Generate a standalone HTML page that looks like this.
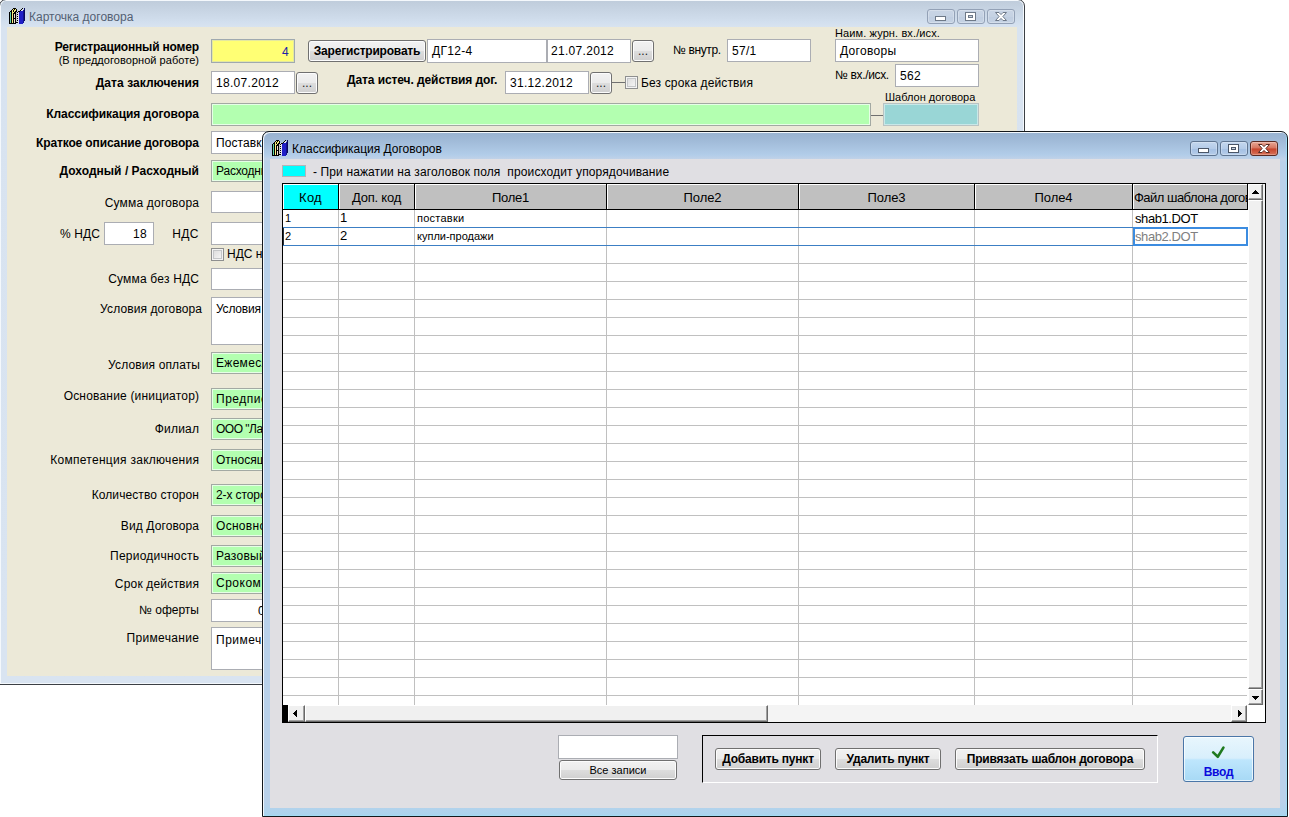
<!DOCTYPE html>
<html lang="ru">
<head>
<meta charset="utf-8">
<title>Карточка договора</title>
<style>
*{box-sizing:border-box;margin:0;padding:0}
html,body{width:1289px;height:817px;overflow:hidden;background:#fff}
body{position:relative;font-family:"Liberation Sans",sans-serif;font-size:12px;color:#000}
.abs,.win,.cl,.lb,.in,.btn,.cap,.cb,.ln,.ttl,.hd,.ct,.sb,.ok{position:absolute}
.win{width:1026px;height:686px;border-radius:7px 7px 0 0;overflow:hidden}
.cl{left:7px;top:27px;width:1010px;height:649px}
#w1{left:-1px;top:-1px;border:1px solid #3c4045;box-shadow:inset 0 0 0 1px #f4f8fc;background:linear-gradient(#bfccdb 0,#c1cedd 3px,#c9d6e5 12px,#d2dfee 22px,#d8e3f0 27px,#d9e4f1 100%)}
#w1 .cl{background:#ece9d8}
#w2{left:262px;top:131px;border:1px solid #14181c;box-shadow:inset 1px 1px 0 #f2f7fc,inset -1px -1px 0 #a2dcf4;background:linear-gradient(#99b3d1 0,#9db7d5 6px,#b2cde9 23px,#c0d2e8 27px,#b9d1ea 30px,#b9d1ea 670px,#aad4ee 684px)}
#w2 .cl{background:#e0dfe3}
.ttl{font-size:12px;white-space:nowrap;line-height:16px}
.lb{white-space:nowrap;line-height:14px;text-align:right}
.b{font-weight:bold}
.in{background:#fff;border:1px solid #abadb3;white-space:nowrap;overflow:hidden;line-height:14px;padding:3px 0 0 4px;letter-spacing:0.3px}
.in.g{background:#b3ffb0;border-color:#a3a9a3;box-shadow:inset 0 0 0 1px #e6ffe6}
.in.y{background:#ffff74;border-color:#9fa9b0;box-shadow:inset 0 0 0 1px #e4e8a0}
.btn{border:1px solid #707070;border-radius:3px;background:linear-gradient(#f2f2f2 0,#ebebeb 48%,#dddddd 52%,#cfcfcf 100%);box-shadow:inset 0 0 0 1px #fcfcfc;text-align:center;white-space:nowrap;line-height:14px}
.cb{width:13px;height:13px;border:1px solid #8e8f8f;background:linear-gradient(135deg,#d8d8d8,#fafafa);box-shadow:inset 0 0 0 1px #f4f4f4, inset 0 0 0 2px #c4c6c8}
.ln{height:1px;background:#707070}
.cap{top:9px;height:15px;width:28px;border:1px solid #93a1b6;border-radius:3px;background:linear-gradient(#c9d5e5,#c5d2e3 50%,#bfcde0 51%,#c6d3e4);box-shadow:inset 0 0 0 1px rgba(255,255,255,.25)}
.cap svg{position:absolute;left:-1px;top:-1px}
.hd{background:#c0c0c0;border-right:1px solid #000;border-bottom:1px solid #000;box-shadow:inset 1px 1px 0 #fff;text-align:center;font-size:13px;line-height:15px;padding-top:6px;white-space:nowrap;overflow:hidden}
.ct{white-space:nowrap;line-height:16px}
.sb{background:#f0f0f0;border:1px solid;border-color:#fff #696969 #696969 #fff;box-shadow:inset -1px -1px 0 #a0a0a0}
.sb svg{position:absolute;left:-1px;top:-1px}
.ok{border:1px solid #4a76a8;border-radius:3px;background:linear-gradient(#e8f6fd 0,#d8effc 48%,#bee6fd 52%,#a7d9f5 100%);box-shadow:inset 0 0 0 1px rgba(255,255,255,.7)}
</style>
</head>
<body>
<div class="win" id="w1">
<svg class="abs" style="left:9px;top:8px" width="16" height="16" viewBox="0 0 16 16" shape-rendering="crispEdges"><rect x="4" y="0" width="3" height="1" fill="#000"/><rect x="13" y="0" width="1" height="1" fill="#000"/><rect x="15" y="0" width="1" height="1" fill="#07075f"/><rect x="3" y="1" width="1" height="1" fill="#000"/><rect x="4" y="1" width="1" height="1" fill="#f7ef7f"/><rect x="5" y="1" width="1" height="1" fill="#000"/><rect x="6" y="1" width="1" height="1" fill="#f7ef7f"/><rect x="7" y="1" width="1" height="1" fill="#000"/><rect x="12" y="1" width="1" height="1" fill="#000"/><rect x="13" y="1" width="1" height="1" fill="#e3e3ef"/><rect x="15" y="1" width="1" height="1" fill="#07075f"/><rect x="2" y="2" width="1" height="1" fill="#000"/><rect x="3" y="2" width="1" height="1" fill="#f7ef7f"/><rect x="4" y="2" width="1" height="1" fill="#000"/><rect x="5" y="2" width="2" height="1" fill="#f7ef7f"/><rect x="7" y="2" width="1" height="1" fill="#000"/><rect x="11" y="2" width="1" height="1" fill="#000"/><rect x="12" y="2" width="2" height="1" fill="#e3e3ef"/><rect x="14" y="2" width="1" height="1" fill="#11118f"/><rect x="15" y="2" width="1" height="1" fill="#07075f"/><rect x="1" y="3" width="2" height="1" fill="#000"/><rect x="3" y="3" width="1" height="1" fill="#f7ef7f"/><rect x="4" y="3" width="1" height="1" fill="#000"/><rect x="5" y="3" width="1" height="1" fill="#f7ef7f"/><rect x="6" y="3" width="2" height="1" fill="#000"/><rect x="8" y="3" width="1" height="1" fill="#e3e3ef"/><rect x="9" y="3" width="2" height="1" fill="#000"/><rect x="11" y="3" width="3" height="1" fill="#1f1fc7"/><rect x="14" y="3" width="1" height="1" fill="#11118f"/><rect x="15" y="3" width="1" height="1" fill="#07075f"/><rect x="0" y="4" width="1" height="1" fill="#000"/><rect x="1" y="4" width="1" height="1" fill="#5fd7a7"/><rect x="2" y="4" width="1" height="1" fill="#000"/><rect x="3" y="4" width="2" height="1" fill="#f7ef7f"/><rect x="5" y="4" width="2" height="1" fill="#000"/><rect x="7" y="4" width="1" height="1" fill="#c3c7bf"/><rect x="8" y="4" width="1" height="1" fill="#000"/><rect x="9" y="4" width="1" height="1" fill="#e3e3ef"/><rect x="10" y="4" width="4" height="1" fill="#1f1fc7"/><rect x="14" y="4" width="1" height="1" fill="#11118f"/><rect x="15" y="4" width="1" height="1" fill="#07075f"/><rect x="0" y="5" width="1" height="1" fill="#000"/><rect x="1" y="5" width="1" height="1" fill="#5fd7a7"/><rect x="2" y="5" width="1" height="1" fill="#000"/><rect x="3" y="5" width="1" height="1" fill="#f7ef7f"/><rect x="4" y="5" width="3" height="1" fill="#000"/><rect x="7" y="5" width="1" height="1" fill="#c3c7bf"/><rect x="8" y="5" width="2" height="1" fill="#e3e3ef"/><rect x="10" y="5" width="4" height="1" fill="#1f1fc7"/><rect x="14" y="5" width="1" height="1" fill="#11118f"/><rect x="15" y="5" width="1" height="1" fill="#07075f"/><rect x="0" y="6" width="1" height="1" fill="#000"/><rect x="1" y="6" width="1" height="1" fill="#5fd7a7"/><rect x="2" y="6" width="1" height="1" fill="#000"/><rect x="3" y="6" width="1" height="1" fill="#f7ef7f"/><rect x="4" y="6" width="1" height="1" fill="#000"/><rect x="5" y="6" width="1" height="1" fill="#f3ddd0"/><rect x="6" y="6" width="1" height="1" fill="#000"/><rect x="7" y="6" width="1" height="1" fill="#c3c7bf"/><rect x="8" y="6" width="1" height="1" fill="#000"/><rect x="9" y="6" width="1" height="1" fill="#e3e3ef"/><rect x="10" y="6" width="4" height="1" fill="#1f1fc7"/><rect x="14" y="6" width="1" height="1" fill="#11118f"/><rect x="15" y="6" width="1" height="1" fill="#07075f"/><rect x="0" y="7" width="1" height="1" fill="#000"/><rect x="1" y="7" width="1" height="1" fill="#5fd7a7"/><rect x="2" y="7" width="1" height="1" fill="#000"/><rect x="3" y="7" width="1" height="1" fill="#f7ef7f"/><rect x="4" y="7" width="1" height="1" fill="#000"/><rect x="5" y="7" width="1" height="1" fill="#f3ddd0"/><rect x="6" y="7" width="1" height="1" fill="#000"/><rect x="7" y="7" width="1" height="1" fill="#c3c7bf"/><rect x="8" y="7" width="2" height="1" fill="#e3e3ef"/><rect x="10" y="7" width="4" height="1" fill="#1f1fc7"/><rect x="14" y="7" width="1" height="1" fill="#11118f"/><rect x="15" y="7" width="1" height="1" fill="#07075f"/><rect x="0" y="8" width="1" height="1" fill="#000"/><rect x="1" y="8" width="1" height="1" fill="#5fd7a7"/><rect x="2" y="8" width="1" height="1" fill="#000"/><rect x="3" y="8" width="1" height="1" fill="#f7ef7f"/><rect x="4" y="8" width="1" height="1" fill="#000"/><rect x="5" y="8" width="1" height="1" fill="#f3ddd0"/><rect x="6" y="8" width="1" height="1" fill="#000"/><rect x="7" y="8" width="1" height="1" fill="#c3c7bf"/><rect x="8" y="8" width="1" height="1" fill="#000"/><rect x="9" y="8" width="1" height="1" fill="#e3e3ef"/><rect x="10" y="8" width="4" height="1" fill="#1f1fc7"/><rect x="14" y="8" width="1" height="1" fill="#11118f"/><rect x="15" y="8" width="1" height="1" fill="#07075f"/><rect x="0" y="9" width="1" height="1" fill="#000"/><rect x="1" y="9" width="1" height="1" fill="#5fd7a7"/><rect x="2" y="9" width="1" height="1" fill="#000"/><rect x="3" y="9" width="1" height="1" fill="#f7ef7f"/><rect x="4" y="9" width="1" height="1" fill="#000"/><rect x="5" y="9" width="1" height="1" fill="#f3ddd0"/><rect x="6" y="9" width="1" height="1" fill="#000"/><rect x="7" y="9" width="1" height="1" fill="#c3c7bf"/><rect x="8" y="9" width="2" height="1" fill="#e3e3ef"/><rect x="10" y="9" width="4" height="1" fill="#1f1fc7"/><rect x="14" y="9" width="1" height="1" fill="#11118f"/><rect x="15" y="9" width="1" height="1" fill="#07075f"/><rect x="0" y="10" width="1" height="1" fill="#000"/><rect x="1" y="10" width="1" height="1" fill="#5fd7a7"/><rect x="2" y="10" width="1" height="1" fill="#000"/><rect x="3" y="10" width="1" height="1" fill="#f7ef7f"/><rect x="4" y="10" width="3" height="1" fill="#000"/><rect x="7" y="10" width="1" height="1" fill="#c3c7bf"/><rect x="8" y="10" width="1" height="1" fill="#000"/><rect x="9" y="10" width="1" height="1" fill="#e3e3ef"/><rect x="10" y="10" width="4" height="1" fill="#1f1fc7"/><rect x="14" y="10" width="1" height="1" fill="#11118f"/><rect x="15" y="10" width="1" height="1" fill="#07075f"/><rect x="0" y="11" width="1" height="1" fill="#000"/><rect x="1" y="11" width="1" height="1" fill="#5fd7a7"/><rect x="2" y="11" width="1" height="1" fill="#000"/><rect x="3" y="11" width="1" height="1" fill="#f7ef7f"/><rect x="4" y="11" width="1" height="1" fill="#000"/><rect x="5" y="11" width="1" height="1" fill="#f3ddd0"/><rect x="6" y="11" width="1" height="1" fill="#000"/><rect x="7" y="11" width="1" height="1" fill="#c3c7bf"/><rect x="8" y="11" width="2" height="1" fill="#e3e3ef"/><rect x="10" y="11" width="4" height="1" fill="#1f1fc7"/><rect x="14" y="11" width="1" height="1" fill="#11118f"/><rect x="15" y="11" width="1" height="1" fill="#07075f"/><rect x="0" y="12" width="1" height="1" fill="#000"/><rect x="1" y="12" width="1" height="1" fill="#5fd7a7"/><rect x="2" y="12" width="1" height="1" fill="#000"/><rect x="3" y="12" width="1" height="1" fill="#f7ef7f"/><rect x="4" y="12" width="1" height="1" fill="#000"/><rect x="5" y="12" width="1" height="1" fill="#f3ddd0"/><rect x="6" y="12" width="1" height="1" fill="#000"/><rect x="7" y="12" width="1" height="1" fill="#c3c7bf"/><rect x="8" y="12" width="1" height="1" fill="#000"/><rect x="9" y="12" width="1" height="1" fill="#e3e3ef"/><rect x="10" y="12" width="4" height="1" fill="#1f1fc7"/><rect x="14" y="12" width="1" height="1" fill="#11118f"/><rect x="15" y="12" width="1" height="1" fill="#07075f"/><rect x="0" y="13" width="1" height="1" fill="#000"/><rect x="1" y="13" width="1" height="1" fill="#5fd7a7"/><rect x="2" y="13" width="1" height="1" fill="#000"/><rect x="3" y="13" width="1" height="1" fill="#f7ef7f"/><rect x="4" y="13" width="1" height="1" fill="#000"/><rect x="5" y="13" width="1" height="1" fill="#f3ddd0"/><rect x="6" y="13" width="1" height="1" fill="#000"/><rect x="7" y="13" width="1" height="1" fill="#c3c7bf"/><rect x="8" y="13" width="2" height="1" fill="#e3e3ef"/><rect x="10" y="13" width="4" height="1" fill="#1f1fc7"/><rect x="14" y="13" width="1" height="1" fill="#11118f"/><rect x="0" y="14" width="1" height="1" fill="#000"/><rect x="1" y="14" width="1" height="1" fill="#5fd7a7"/><rect x="2" y="14" width="1" height="1" fill="#000"/><rect x="3" y="14" width="1" height="1" fill="#f7ef7f"/><rect x="4" y="14" width="1" height="1" fill="#000"/><rect x="5" y="14" width="1" height="1" fill="#f3ddd0"/><rect x="6" y="14" width="3" height="1" fill="#000"/><rect x="9" y="14" width="1" height="1" fill="#e3e3ef"/><rect x="10" y="14" width="4" height="1" fill="#1f1fc7"/><rect x="14" y="14" width="1" height="1" fill="#11118f"/><rect x="0" y="15" width="7" height="1" fill="#000"/><rect x="10" y="15" width="4" height="1" fill="#1f1fc7"/></svg>
<div class="ttl" style="left:29px;top:9px;color:#546173">Карточка договора</div>
<div class="cap" style="left:927px"><svg width="28" height="15"><rect x="8.5" y="7.5" width="10" height="4" fill="#fff" stroke="#6e7988"/></svg></div>
<div class="cap" style="left:957px"><svg width="28" height="15"><rect x="8.5" y="3.5" width="10" height="8" fill="#fff" stroke="#6e7988"/><rect x="11.5" y="6.5" width="4" height="2" fill="#c8d0dc" stroke="#6e7988"/></svg></div>
<div class="cap" style="left:987px"><svg width="28" height="15"><path d="M8.5 3.5 L12 3.5 L14 5.6 L16 3.5 L19.5 3.5 L15.9 7.5 L19.5 11.5 L16 11.5 L14 9.4 L12 11.5 L8.5 11.5 L12.1 7.5Z" fill="#fff" stroke="#6e7988" stroke-width="1" stroke-linejoin="round"/></svg></div>
<div class="cl" id="c1">
<div class="lb b" style="top:13px;letter-spacing:-0.196px;left:0;width:191.80px;">Регистрационный номер</div>
<div class="lb" style="top:26px;letter-spacing:0.044px;left:0;width:192.04px;font-size:11px;">(В преддоговорной работе)</div>
<div class="lb b" style="top:49px;letter-spacing:0.06px;left:0;width:192.06px;">Дата заключения</div>
<div class="lb b" style="top:80px;letter-spacing:-0.043px;left:0;width:191.96px;">Классификация договора</div>
<div class="lb b" style="top:109px;letter-spacing:-0.132px;left:0;width:191.87px;">Краткое описание договора</div>
<div class="lb b" style="top:137px;letter-spacing:0.034px;left:0;width:192.03px;">Доходный / Расходный</div>
<div class="lb" style="top:169px;letter-spacing:0.198px;left:0;width:192.20px;">Сумма договора</div>
<div class="lb" style="top:200px;letter-spacing:0.106px;left:0;width:93.11px;">% НДС</div>
<div class="lb" style="top:200px;letter-spacing:0.41px;left:0;width:191.91px;">НДС</div>
<div class="lb" style="top:245px;letter-spacing:0.195px;left:0;width:192.19px;">Сумма без НДС</div>
<div class="lb" style="top:275px;letter-spacing:0.109px;left:0;width:195.11px;">Условия договора</div>
<div class="lb" style="top:331px;letter-spacing:0.125px;left:0;width:193.12px;">Условия оплаты</div>
<div class="lb" style="top:362px;letter-spacing:0.187px;left:0;width:192.19px;">Основание (инициатор)</div>
<div class="lb" style="top:395px;letter-spacing:0.199px;left:0;width:192.20px;">Филиал</div>
<div class="lb" style="top:426px;letter-spacing:0.282px;left:0;width:192.28px;">Компетенция заключения</div>
<div class="lb" style="top:461px;letter-spacing:0.097px;left:0;width:192.10px;">Количество сторон</div>
<div class="lb" style="top:492px;letter-spacing:0.108px;left:0;width:192.11px;">Вид Договора</div>
<div class="lb" style="top:522px;letter-spacing:0.232px;left:0;width:192.23px;">Периодичность</div>
<div class="lb" style="top:550px;letter-spacing:0.173px;left:0;width:192.17px;">Срок действия</div>
<div class="lb" style="top:576px;letter-spacing:-0.007px;left:0;width:191.99px;">№ оферты</div>
<div class="lb" style="top:604px;letter-spacing:0.345px;left:0;width:192.34px;">Примечание</div>
<div class="in y" style="left:204px;top:12px;width:84px;height:24px;text-align:right;padding:5px 5px 0 0;color:#2020a8">4</div>
<div class="btn" style="left:301px;top:13px;width:118px;height:22px;font-weight:bold;letter-spacing:-0.2px;padding-top:3px">Зарегистрировать</div>
<div class="in " style="left:420px;top:12px;width:120px;height:24px;padding:4px 0 0 4px">ДГ12-4</div>
<div class="in " style="left:540px;top:12px;width:84px;height:24px;padding:4px 0 0 3px">21.07.2012</div>
<div class="btn" style="left:625px;top:13px;width:22px;height:22px;padding-top:3px;color:#222">...</div>
<div class="lb" style="top:16px;letter-spacing:-0.375px;left:666px;text-align:left;">№ внутр.</div>
<div class="in " style="left:720px;top:12px;width:84px;height:23px;padding-top:4px">57/1</div>
<div class="lb" style="top:-1px;letter-spacing:0.113px;left:828px;text-align:left;font-size:11px;">Наим. журн. вх./исх.</div>
<div class="in " style="left:828px;top:12px;width:144px;height:23px;padding-top:4px">Договоры</div>
<div class="lb" style="top:41px;letter-spacing:-0.347px;left:828px;text-align:left;">№ вх./исх.</div>
<div class="in " style="left:888px;top:37px;width:84px;height:23px;padding-top:4px">562</div>
<div class="in " style="left:204px;top:44px;width:84px;height:23px;padding-top:4px">18.07.2012</div>
<div class="btn" style="left:289px;top:45px;width:22px;height:22px;padding-top:3px;color:#222">...</div>
<div class="lb b" style="top:46px;letter-spacing:-0.088px;left:340px;text-align:left;">Дата истеч. действия дог.</div>
<div class="in " style="left:498px;top:44px;width:84px;height:23px;padding-top:4px">31.12.2012</div>
<div class="btn" style="left:583px;top:45px;width:22px;height:22px;padding-top:3px;color:#222">...</div>
<div class="ln" style="left:605px;top:55px;width:13px"></div>
<div class="cb" style="left:618px;top:49px"></div>
<div class="lb" style="top:49px;letter-spacing:0.149px;left:634px;text-align:left;">Без срока действия</div>
<div class="in g" style="left:204px;top:76px;width:660px;height:23px;"></div>
<div class="ln" style="left:864px;top:88px;width:12px"></div>
<div class="lb" style="top:63px;left:878px;text-align:left;font-size:11px;">Шаблон договора</div>
<div class="in " style="left:876px;top:76px;width:96px;height:23px;background:#99d6d6;border-color:#b9c3c3;box-shadow:inset 0 0 0 1px #c8e8e8"></div>
<div class="in " style="left:204px;top:104px;width:349px;height:23px;padding-top:4px;letter-spacing:0.1px">Поставка оборудования</div>
<div class="in g" style="left:204px;top:133px;width:189px;height:22px;letter-spacing:-0.2px">Расходный</div>
<div class="in " style="left:204px;top:164px;width:119px;height:22px;"></div>
<div class="in " style="left:97px;top:195px;width:50px;height:23px;text-align:right;padding:4px 6px 0 0">18</div>
<div class="in " style="left:204px;top:195px;width:119px;height:23px;"></div>
<div class="cb" style="left:204px;top:221px"></div>
<div class="lb" style="top:220px;left:220px;text-align:left;">НДС не облагается</div>
<div class="in " style="left:204px;top:241px;width:119px;height:22px;"></div>
<div class="in " style="left:204px;top:270px;width:349px;height:48px;padding-top:4px;letter-spacing:-0.2px">Условия договора</div>
<div class="in g" style="left:204px;top:325px;width:189px;height:22px;letter-spacing:0.3px">Ежемесячно</div>
<div class="in g" style="left:204px;top:361px;width:189px;height:22px;letter-spacing:0.5px">Предписание</div>
<div class="in g" style="left:204px;top:391px;width:189px;height:22px;letter-spacing:-0.5px">ООО "Лабиринт"</div>
<div class="in g" style="left:204px;top:422px;width:189px;height:22px;letter-spacing:0px">Относящиеся</div>
<div class="in g" style="left:204px;top:457px;width:189px;height:22px;letter-spacing:-0.1px">2-х сторонний</div>
<div class="in g" style="left:204px;top:488px;width:189px;height:22px;letter-spacing:0.3px">Основной</div>
<div class="in g" style="left:204px;top:518px;width:189px;height:22px;letter-spacing:0.3px">Разовый</div>
<div class="in g" style="left:204px;top:545px;width:189px;height:22px;letter-spacing:0.5px">Сроком</div>
<div class="in " style="left:204px;top:572px;width:59px;height:23px;text-align:right;padding:4px 4px 0 0">0</div>
<div class="in " style="left:204px;top:600px;width:349px;height:43px;padding-top:5px;letter-spacing:0.5px">Примечание</div>
</div>
</div>
<div class="win" id="w2">
<svg class="abs" style="left:9px;top:8px" width="16" height="16" viewBox="0 0 16 16" shape-rendering="crispEdges"><rect x="4" y="0" width="3" height="1" fill="#000"/><rect x="13" y="0" width="1" height="1" fill="#000"/><rect x="15" y="0" width="1" height="1" fill="#07075f"/><rect x="3" y="1" width="1" height="1" fill="#000"/><rect x="4" y="1" width="1" height="1" fill="#f7ef7f"/><rect x="5" y="1" width="1" height="1" fill="#000"/><rect x="6" y="1" width="1" height="1" fill="#f7ef7f"/><rect x="7" y="1" width="1" height="1" fill="#000"/><rect x="12" y="1" width="1" height="1" fill="#000"/><rect x="13" y="1" width="1" height="1" fill="#e3e3ef"/><rect x="15" y="1" width="1" height="1" fill="#07075f"/><rect x="2" y="2" width="1" height="1" fill="#000"/><rect x="3" y="2" width="1" height="1" fill="#f7ef7f"/><rect x="4" y="2" width="1" height="1" fill="#000"/><rect x="5" y="2" width="2" height="1" fill="#f7ef7f"/><rect x="7" y="2" width="1" height="1" fill="#000"/><rect x="11" y="2" width="1" height="1" fill="#000"/><rect x="12" y="2" width="2" height="1" fill="#e3e3ef"/><rect x="14" y="2" width="1" height="1" fill="#11118f"/><rect x="15" y="2" width="1" height="1" fill="#07075f"/><rect x="1" y="3" width="2" height="1" fill="#000"/><rect x="3" y="3" width="1" height="1" fill="#f7ef7f"/><rect x="4" y="3" width="1" height="1" fill="#000"/><rect x="5" y="3" width="1" height="1" fill="#f7ef7f"/><rect x="6" y="3" width="2" height="1" fill="#000"/><rect x="8" y="3" width="1" height="1" fill="#e3e3ef"/><rect x="9" y="3" width="2" height="1" fill="#000"/><rect x="11" y="3" width="3" height="1" fill="#1f1fc7"/><rect x="14" y="3" width="1" height="1" fill="#11118f"/><rect x="15" y="3" width="1" height="1" fill="#07075f"/><rect x="0" y="4" width="1" height="1" fill="#000"/><rect x="1" y="4" width="1" height="1" fill="#5fd7a7"/><rect x="2" y="4" width="1" height="1" fill="#000"/><rect x="3" y="4" width="2" height="1" fill="#f7ef7f"/><rect x="5" y="4" width="2" height="1" fill="#000"/><rect x="7" y="4" width="1" height="1" fill="#c3c7bf"/><rect x="8" y="4" width="1" height="1" fill="#000"/><rect x="9" y="4" width="1" height="1" fill="#e3e3ef"/><rect x="10" y="4" width="4" height="1" fill="#1f1fc7"/><rect x="14" y="4" width="1" height="1" fill="#11118f"/><rect x="15" y="4" width="1" height="1" fill="#07075f"/><rect x="0" y="5" width="1" height="1" fill="#000"/><rect x="1" y="5" width="1" height="1" fill="#5fd7a7"/><rect x="2" y="5" width="1" height="1" fill="#000"/><rect x="3" y="5" width="1" height="1" fill="#f7ef7f"/><rect x="4" y="5" width="3" height="1" fill="#000"/><rect x="7" y="5" width="1" height="1" fill="#c3c7bf"/><rect x="8" y="5" width="2" height="1" fill="#e3e3ef"/><rect x="10" y="5" width="4" height="1" fill="#1f1fc7"/><rect x="14" y="5" width="1" height="1" fill="#11118f"/><rect x="15" y="5" width="1" height="1" fill="#07075f"/><rect x="0" y="6" width="1" height="1" fill="#000"/><rect x="1" y="6" width="1" height="1" fill="#5fd7a7"/><rect x="2" y="6" width="1" height="1" fill="#000"/><rect x="3" y="6" width="1" height="1" fill="#f7ef7f"/><rect x="4" y="6" width="1" height="1" fill="#000"/><rect x="5" y="6" width="1" height="1" fill="#f3ddd0"/><rect x="6" y="6" width="1" height="1" fill="#000"/><rect x="7" y="6" width="1" height="1" fill="#c3c7bf"/><rect x="8" y="6" width="1" height="1" fill="#000"/><rect x="9" y="6" width="1" height="1" fill="#e3e3ef"/><rect x="10" y="6" width="4" height="1" fill="#1f1fc7"/><rect x="14" y="6" width="1" height="1" fill="#11118f"/><rect x="15" y="6" width="1" height="1" fill="#07075f"/><rect x="0" y="7" width="1" height="1" fill="#000"/><rect x="1" y="7" width="1" height="1" fill="#5fd7a7"/><rect x="2" y="7" width="1" height="1" fill="#000"/><rect x="3" y="7" width="1" height="1" fill="#f7ef7f"/><rect x="4" y="7" width="1" height="1" fill="#000"/><rect x="5" y="7" width="1" height="1" fill="#f3ddd0"/><rect x="6" y="7" width="1" height="1" fill="#000"/><rect x="7" y="7" width="1" height="1" fill="#c3c7bf"/><rect x="8" y="7" width="2" height="1" fill="#e3e3ef"/><rect x="10" y="7" width="4" height="1" fill="#1f1fc7"/><rect x="14" y="7" width="1" height="1" fill="#11118f"/><rect x="15" y="7" width="1" height="1" fill="#07075f"/><rect x="0" y="8" width="1" height="1" fill="#000"/><rect x="1" y="8" width="1" height="1" fill="#5fd7a7"/><rect x="2" y="8" width="1" height="1" fill="#000"/><rect x="3" y="8" width="1" height="1" fill="#f7ef7f"/><rect x="4" y="8" width="1" height="1" fill="#000"/><rect x="5" y="8" width="1" height="1" fill="#f3ddd0"/><rect x="6" y="8" width="1" height="1" fill="#000"/><rect x="7" y="8" width="1" height="1" fill="#c3c7bf"/><rect x="8" y="8" width="1" height="1" fill="#000"/><rect x="9" y="8" width="1" height="1" fill="#e3e3ef"/><rect x="10" y="8" width="4" height="1" fill="#1f1fc7"/><rect x="14" y="8" width="1" height="1" fill="#11118f"/><rect x="15" y="8" width="1" height="1" fill="#07075f"/><rect x="0" y="9" width="1" height="1" fill="#000"/><rect x="1" y="9" width="1" height="1" fill="#5fd7a7"/><rect x="2" y="9" width="1" height="1" fill="#000"/><rect x="3" y="9" width="1" height="1" fill="#f7ef7f"/><rect x="4" y="9" width="1" height="1" fill="#000"/><rect x="5" y="9" width="1" height="1" fill="#f3ddd0"/><rect x="6" y="9" width="1" height="1" fill="#000"/><rect x="7" y="9" width="1" height="1" fill="#c3c7bf"/><rect x="8" y="9" width="2" height="1" fill="#e3e3ef"/><rect x="10" y="9" width="4" height="1" fill="#1f1fc7"/><rect x="14" y="9" width="1" height="1" fill="#11118f"/><rect x="15" y="9" width="1" height="1" fill="#07075f"/><rect x="0" y="10" width="1" height="1" fill="#000"/><rect x="1" y="10" width="1" height="1" fill="#5fd7a7"/><rect x="2" y="10" width="1" height="1" fill="#000"/><rect x="3" y="10" width="1" height="1" fill="#f7ef7f"/><rect x="4" y="10" width="3" height="1" fill="#000"/><rect x="7" y="10" width="1" height="1" fill="#c3c7bf"/><rect x="8" y="10" width="1" height="1" fill="#000"/><rect x="9" y="10" width="1" height="1" fill="#e3e3ef"/><rect x="10" y="10" width="4" height="1" fill="#1f1fc7"/><rect x="14" y="10" width="1" height="1" fill="#11118f"/><rect x="15" y="10" width="1" height="1" fill="#07075f"/><rect x="0" y="11" width="1" height="1" fill="#000"/><rect x="1" y="11" width="1" height="1" fill="#5fd7a7"/><rect x="2" y="11" width="1" height="1" fill="#000"/><rect x="3" y="11" width="1" height="1" fill="#f7ef7f"/><rect x="4" y="11" width="1" height="1" fill="#000"/><rect x="5" y="11" width="1" height="1" fill="#f3ddd0"/><rect x="6" y="11" width="1" height="1" fill="#000"/><rect x="7" y="11" width="1" height="1" fill="#c3c7bf"/><rect x="8" y="11" width="2" height="1" fill="#e3e3ef"/><rect x="10" y="11" width="4" height="1" fill="#1f1fc7"/><rect x="14" y="11" width="1" height="1" fill="#11118f"/><rect x="15" y="11" width="1" height="1" fill="#07075f"/><rect x="0" y="12" width="1" height="1" fill="#000"/><rect x="1" y="12" width="1" height="1" fill="#5fd7a7"/><rect x="2" y="12" width="1" height="1" fill="#000"/><rect x="3" y="12" width="1" height="1" fill="#f7ef7f"/><rect x="4" y="12" width="1" height="1" fill="#000"/><rect x="5" y="12" width="1" height="1" fill="#f3ddd0"/><rect x="6" y="12" width="1" height="1" fill="#000"/><rect x="7" y="12" width="1" height="1" fill="#c3c7bf"/><rect x="8" y="12" width="1" height="1" fill="#000"/><rect x="9" y="12" width="1" height="1" fill="#e3e3ef"/><rect x="10" y="12" width="4" height="1" fill="#1f1fc7"/><rect x="14" y="12" width="1" height="1" fill="#11118f"/><rect x="15" y="12" width="1" height="1" fill="#07075f"/><rect x="0" y="13" width="1" height="1" fill="#000"/><rect x="1" y="13" width="1" height="1" fill="#5fd7a7"/><rect x="2" y="13" width="1" height="1" fill="#000"/><rect x="3" y="13" width="1" height="1" fill="#f7ef7f"/><rect x="4" y="13" width="1" height="1" fill="#000"/><rect x="5" y="13" width="1" height="1" fill="#f3ddd0"/><rect x="6" y="13" width="1" height="1" fill="#000"/><rect x="7" y="13" width="1" height="1" fill="#c3c7bf"/><rect x="8" y="13" width="2" height="1" fill="#e3e3ef"/><rect x="10" y="13" width="4" height="1" fill="#1f1fc7"/><rect x="14" y="13" width="1" height="1" fill="#11118f"/><rect x="0" y="14" width="1" height="1" fill="#000"/><rect x="1" y="14" width="1" height="1" fill="#5fd7a7"/><rect x="2" y="14" width="1" height="1" fill="#000"/><rect x="3" y="14" width="1" height="1" fill="#f7ef7f"/><rect x="4" y="14" width="1" height="1" fill="#000"/><rect x="5" y="14" width="1" height="1" fill="#f3ddd0"/><rect x="6" y="14" width="3" height="1" fill="#000"/><rect x="9" y="14" width="1" height="1" fill="#e3e3ef"/><rect x="10" y="14" width="4" height="1" fill="#1f1fc7"/><rect x="14" y="14" width="1" height="1" fill="#11118f"/><rect x="0" y="15" width="7" height="1" fill="#000"/><rect x="10" y="15" width="4" height="1" fill="#1f1fc7"/></svg>
<div class="ttl" style="left:29px;top:9px;color:#000">Классификация Договоров</div>
<div class="cap" style="left:927px;border-color:#5f7591;background:linear-gradient(#c4d7ee,#b4cbe8 50%,#a3bfe2 51%,#b6cdea)"><svg width="28" height="15"><rect x="8.5" y="7.5" width="10" height="4" fill="#fff" stroke="#4a5668"/></svg></div>
<div class="cap" style="left:957px;border-color:#5f7591;background:linear-gradient(#c4d7ee,#b4cbe8 50%,#a3bfe2 51%,#b6cdea)"><svg width="28" height="15"><rect x="8.5" y="3.5" width="10" height="8" fill="#fff" stroke="#4a5668"/><rect x="11.5" y="6.5" width="4" height="2" fill="#c8d0dc" stroke="#4a5668"/></svg></div>
<div class="cap" style="left:987px;border-color:#5a2a22;background:linear-gradient(#e8a896,#d6735c 48%,#c6432a 52%,#d8735a)"><svg width="28" height="15"><path d="M8.5 3.5 L12 3.5 L14 5.6 L16 3.5 L19.5 3.5 L15.9 7.5 L19.5 11.5 L16 11.5 L14 9.4 L12 11.5 L8.5 11.5 L12.1 7.5Z" fill="#fff" stroke="#5a2a22" stroke-width="1" stroke-linejoin="round"/></svg></div>
<div class="cl" id="c2">
<div class="abs" style="left:12px;top:6px;width:24px;height:12px;background:#00ffff;border:1px solid #b4b4b8"></div>
<div class="lb" style="left:43px;top:6px;text-align:left;letter-spacing:0.121px">- При нажатии на заголовок поля&nbsp; происходит упорядочивание</div>
<div class="abs" style="left:12px;top:24px;width:984px;height:540px;border:1px solid #000;background:#fff;overflow:hidden">
<div class="hd" style="left:0px;top:0px;width:56px;height:26px;background:#00ffff;letter-spacing:0.23px;">Код</div>
<div class="hd" style="left:56px;top:0px;width:76px;height:26px;letter-spacing:-0.225px;">Доп. код</div>
<div class="hd" style="left:132px;top:0px;width:192px;height:26px;letter-spacing:-0.289px;">Поле1</div>
<div class="hd" style="left:324px;top:0px;width:192px;height:26px;letter-spacing:-0.069px;">Поле2</div>
<div class="hd" style="left:516px;top:0px;width:176px;height:26px;letter-spacing:-0.069px;">Поле3</div>
<div class="hd" style="left:692px;top:0px;width:158px;height:26px;letter-spacing:-0.069px;">Поле4</div>
<div class="hd" style="left:850px;top:0px;width:115px;height:26px;text-align:left;padding-left:1px;letter-spacing:-0.52px;">Файл шаблона договора</div>
<div class="abs" style="left:0px;top:26px;width:965px;height:495px;background:#fff"></div>
<div class="abs" style="left:0px;top:43px;width:964px;height:1px;background:#c0c0c0"></div>
<div class="abs" style="left:0px;top:61px;width:964px;height:1px;background:#c0c0c0"></div>
<div class="abs" style="left:0px;top:79px;width:964px;height:1px;background:#c0c0c0"></div>
<div class="abs" style="left:0px;top:97px;width:964px;height:1px;background:#c0c0c0"></div>
<div class="abs" style="left:0px;top:115px;width:964px;height:1px;background:#c0c0c0"></div>
<div class="abs" style="left:0px;top:133px;width:964px;height:1px;background:#c0c0c0"></div>
<div class="abs" style="left:0px;top:151px;width:964px;height:1px;background:#c0c0c0"></div>
<div class="abs" style="left:0px;top:169px;width:964px;height:1px;background:#c0c0c0"></div>
<div class="abs" style="left:0px;top:187px;width:964px;height:1px;background:#c0c0c0"></div>
<div class="abs" style="left:0px;top:205px;width:964px;height:1px;background:#c0c0c0"></div>
<div class="abs" style="left:0px;top:223px;width:964px;height:1px;background:#c0c0c0"></div>
<div class="abs" style="left:0px;top:241px;width:964px;height:1px;background:#c0c0c0"></div>
<div class="abs" style="left:0px;top:259px;width:964px;height:1px;background:#c0c0c0"></div>
<div class="abs" style="left:0px;top:277px;width:964px;height:1px;background:#c0c0c0"></div>
<div class="abs" style="left:0px;top:295px;width:964px;height:1px;background:#c0c0c0"></div>
<div class="abs" style="left:0px;top:313px;width:964px;height:1px;background:#c0c0c0"></div>
<div class="abs" style="left:0px;top:331px;width:964px;height:1px;background:#c0c0c0"></div>
<div class="abs" style="left:0px;top:349px;width:964px;height:1px;background:#c0c0c0"></div>
<div class="abs" style="left:0px;top:367px;width:964px;height:1px;background:#c0c0c0"></div>
<div class="abs" style="left:0px;top:385px;width:964px;height:1px;background:#c0c0c0"></div>
<div class="abs" style="left:0px;top:403px;width:964px;height:1px;background:#c0c0c0"></div>
<div class="abs" style="left:0px;top:421px;width:964px;height:1px;background:#c0c0c0"></div>
<div class="abs" style="left:0px;top:439px;width:964px;height:1px;background:#c0c0c0"></div>
<div class="abs" style="left:0px;top:457px;width:964px;height:1px;background:#c0c0c0"></div>
<div class="abs" style="left:0px;top:475px;width:964px;height:1px;background:#c0c0c0"></div>
<div class="abs" style="left:0px;top:493px;width:964px;height:1px;background:#c0c0c0"></div>
<div class="abs" style="left:0px;top:511px;width:964px;height:1px;background:#c0c0c0"></div>
<div class="abs" style="left:55px;top:26px;width:1px;height:495px;background:#c0c0c0"></div>
<div class="abs" style="left:131px;top:26px;width:1px;height:495px;background:#c0c0c0"></div>
<div class="abs" style="left:323px;top:26px;width:1px;height:495px;background:#c0c0c0"></div>
<div class="abs" style="left:515px;top:26px;width:1px;height:495px;background:#c0c0c0"></div>
<div class="abs" style="left:691px;top:26px;width:1px;height:495px;background:#c0c0c0"></div>
<div class="abs" style="left:849px;top:26px;width:1px;height:495px;background:#c0c0c0"></div>
<div class="abs" style="left:0px;top:43px;width:964px;height:1px;background:#3c7fc4"></div>
<div class="abs" style="left:0px;top:61px;width:964px;height:1px;background:#3c7fc4"></div>
<div class="abs" style="left:0px;top:44px;width:1px;height:17px;background:#26303c"></div>
<div class="ct" style="left:2px;top:26px;font-size:11px;color:#000;">1</div>
<div class="ct" style="left:57px;top:26px;font-size:13px;color:#000;">1</div>
<div class="ct" style="left:134px;top:26px;font-size:11px;color:#000;letter-spacing:0.249px;">поставки</div>
<div class="ct" style="left:852px;top:27px;font-size:13px;color:#000;letter-spacing:-0.42px;">shab1.DOT</div>
<div class="ct" style="left:2px;top:44px;font-size:11px;color:#000;">2</div>
<div class="ct" style="left:57px;top:44px;font-size:13px;color:#000;">2</div>
<div class="ct" style="left:134px;top:44px;font-size:11px;color:#000;letter-spacing:-0.002px;">купли-продажи</div>
<div class="abs" style="left:850px;top:43px;width:115px;height:19px;border:2px solid #3c8ce0;background:#fff"></div>
<div class="ct" style="left:852px;top:45px;font-size:13px;color:#808080;letter-spacing:-0.42px;">shab2.DOT</div>
<div class="abs" style="left:965px;top:0px;width:17px;height:521px;background:#f2f2f2"></div>
<div class="sb" style="left:965px;top:0px;width:15px;height:16px;"><svg width="15" height="16" shape-rendering="crispEdges" fill="#000"><rect x="7" y="6" width="1" height="1"/><rect x="6" y="7" width="3" height="1"/><rect x="5" y="8" width="5" height="1"/><rect x="4" y="9" width="7" height="1"/></svg></div>
<div class="sb" style="left:965px;top:16px;width:15px;height:489px;"></div>
<div class="sb" style="left:965px;top:505px;width:15px;height:16px;"><svg width="15" height="16" shape-rendering="crispEdges" fill="#000"><rect x="4" y="7" width="7" height="1"/><rect x="5" y="8" width="5" height="1"/><rect x="6" y="9" width="3" height="1"/><rect x="7" y="10" width="1" height="1"/></svg></div>
<div class="abs" style="left:0px;top:521px;width:964px;height:17px;background:#f4f4f4"></div>
<div class="abs" style="left:0px;top:521px;width:5px;height:17px;background:#000"></div>
<div class="sb" style="left:5px;top:521px;width:17px;height:17px;"><svg width="17" height="17" shape-rendering="crispEdges" fill="#000"><rect x="8" y="5" width="1" height="7"/><rect x="7" y="6" width="1" height="5"/><rect x="6" y="7" width="1" height="3"/><rect x="5" y="8" width="1" height="1"/></svg></div>
<div class="sb" style="left:22px;top:521px;width:463px;height:17px;"></div>
<div class="sb" style="left:948px;top:521px;width:16px;height:17px;"><svg width="16" height="17" shape-rendering="crispEdges" fill="#000"><rect x="7" y="5" width="1" height="7"/><rect x="8" y="6" width="1" height="5"/><rect x="9" y="7" width="1" height="3"/><rect x="10" y="8" width="1" height="1"/></svg></div>
<div class="abs" style="left:964px;top:521px;width:18px;height:17px;background:#fff"></div>
</div>
<div class="in" style="left:288px;top:576px;width:120px;height:24px;"></div>
<div class="btn" style="left:289px;top:601px;width:118px;height:20px;font-size:11px;padding-top:2px;">Все записи</div>
<div class="abs" style="left:432px;top:576px;width:456px;height:48px;border:1px solid;border-color:#000 #fff #fff #000"></div>
<div class="btn" style="left:445px;top:589px;width:106px;height:22px;font-weight:bold;letter-spacing:-0.2px;padding-top:3px;">Добавить пункт</div>
<div class="btn" style="left:565px;top:589px;width:106px;height:22px;font-weight:bold;letter-spacing:-0.2px;padding-top:3px;">Удалить пункт</div>
<div class="btn" style="left:685px;top:589px;width:190px;height:22px;font-weight:bold;letter-spacing:-0.2px;padding-top:3px;">Привязать шаблон договора</div>
<div class="ok" style="left:913px;top:577px;width:71px;height:46px;"><svg class="abs" style="left:27px;top:9px" width="16" height="14" viewBox="0 0 16 14"><path d="M2.2 6.4 L6.8 10.8 L12.4 1.6" fill="none" stroke="#1f7a1f" stroke-width="2.6" stroke-linecap="round" stroke-linejoin="round"/></svg><div class="abs" style="left:0;top:28px;width:100%;text-align:center;font-weight:bold;color:#0a0adc;letter-spacing:-0.3px;line-height:14px">Ввод</div></div>
</div>
</div>
</body>
</html>
